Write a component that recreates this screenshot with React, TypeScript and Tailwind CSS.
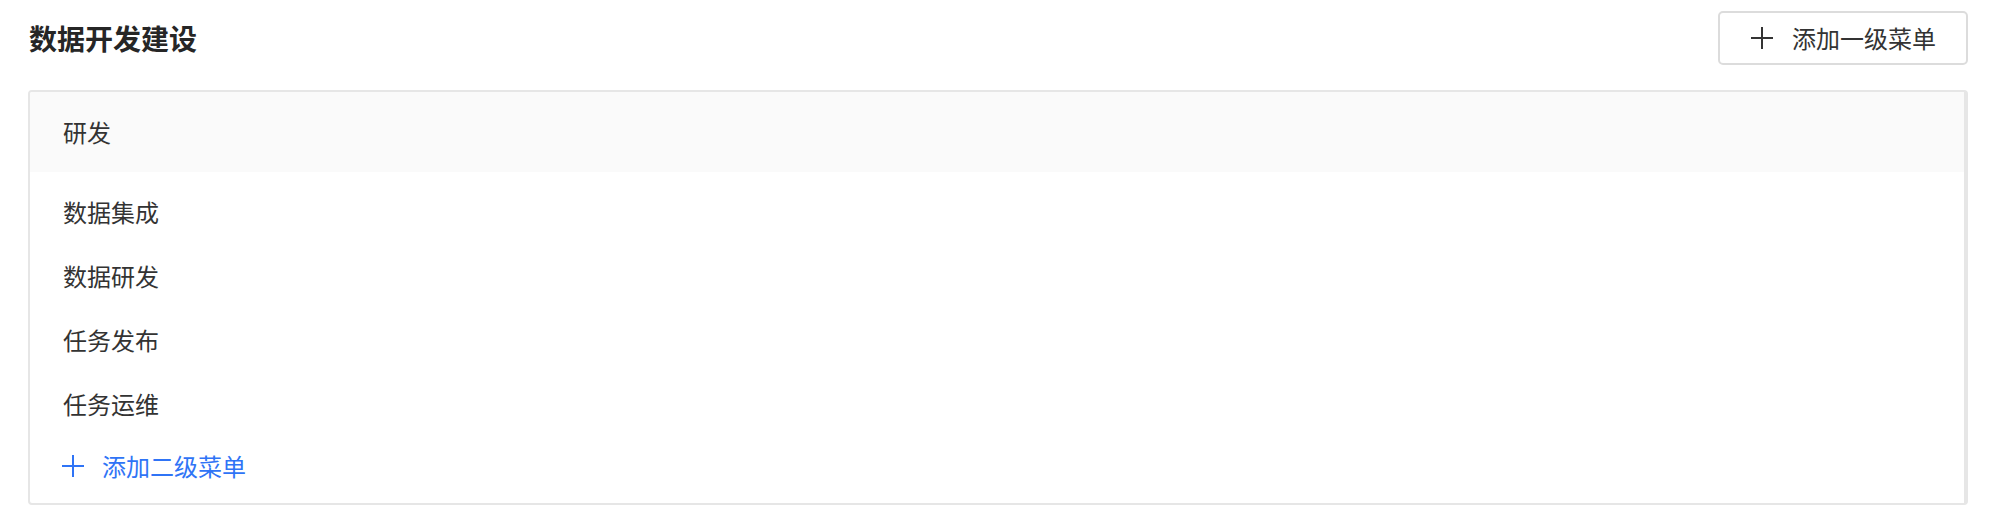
import React from "react";

const Plus = ({ className }: { className?: string }) => (
  <svg viewBox="0 0 22 22" className={className} fill="none" stroke="currentColor" strokeWidth="2">
    <path d="M0 11H22M11 0V22" />
  </svg>
);

export default function App() {
  const items = ["数据集成", "数据研发", "任务发布", "任务运维"];
  return (
    <div
      className="w-[2006px] h-[518px] bg-white pl-[28px] pr-[38px] pt-[11px]"
      style={{ fontFamily: '"Noto Sans CJK SC", "Noto Sans", sans-serif' }}
    >
      <div className="flex items-center justify-between h-[54px]">
        <h1 className="text-[28px] leading-none font-bold text-[#262626] pl-[1px]">数据开发建设</h1>
        <button className="flex items-center w-[250px] h-[54px] border-2 border-[#dcdcdc] rounded-[5px] bg-white pl-[31px] text-[#333333]">
          <Plus className="w-[22px] h-[22px]" />
          <span className="ml-[19px] text-[24px] leading-none">添加一级菜单</span>
        </button>
      </div>
      <div className="mt-[25px] w-[1940px] h-[415px] border-l-2 border-t-2 border-b-2 border-r-4 border-[#e6e6e6] rounded-[4px] overflow-hidden">
        <div className="h-[80px] bg-[#fafafa] flex items-center pl-[33px] text-[24px] text-[#333333]">研发</div>
        <div className="pt-[8px]">
          {items.map((t) => (
            <div key={t} className="h-[64px] flex items-center pl-[33px] text-[24px] text-[#333333]">
              {t}
            </div>
          ))}
          <div className="h-[60px] flex items-center pl-[32px] text-[24px] text-[#2f74f6]">
            <Plus className="w-[22px] h-[22px]" />
            <span className="ml-[18px]">添加二级菜单</span>
          </div>
        </div>
      </div>
    </div>
  );
}
